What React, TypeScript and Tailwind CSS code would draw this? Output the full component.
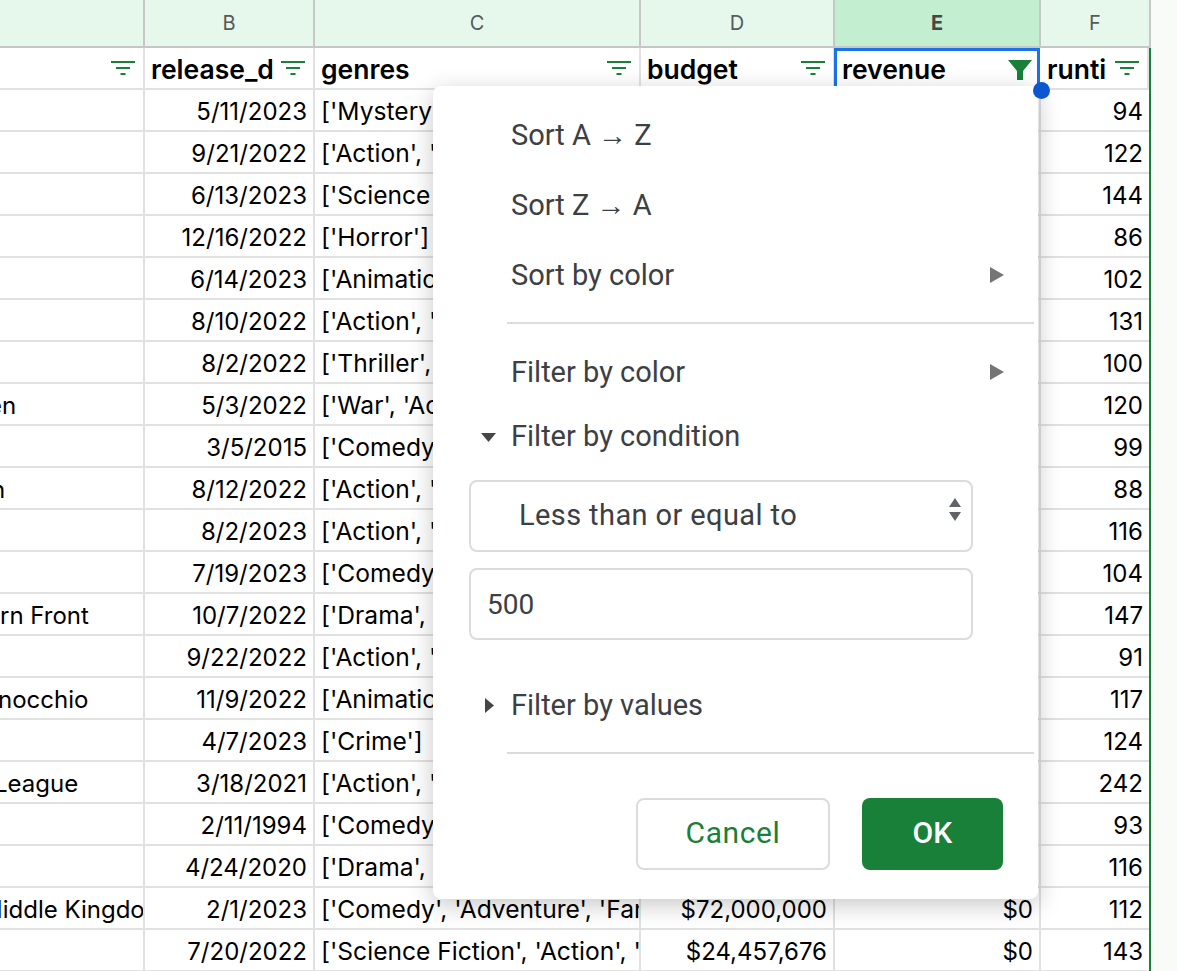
const COLS = [145, 170, 326, 194, 206, 108]

const ROWS: [string, string, string, string, string, string][] = [
  ['', '5/11/2023', "['Mystery', 'Thriller']", '', '', '94'],
  ['', '9/21/2022', "['Action', 'Comedy']", '', '', '122'],
  ['', '6/13/2023', "['Science Fiction']", '', '', '144'],
  ['', '12/16/2022', "['Horror']", '', '', '86'],
  ['', '6/14/2023', "['Animation', 'Family']", '', '', '102'],
  ['', '8/10/2022', "['Action', 'Crime']", '', '', '131'],
  ['', '8/2/2022', "['Thriller', 'Action']", '', '', '100'],
  ['en', '5/3/2022', "['War', 'Action']", '', '', '120'],
  ['', '3/5/2015', "['Comedy', 'Drama']", '', '', '99'],
  ['n', '8/12/2022', "['Action', 'Thriller']", '', '', '88'],
  ['', '8/2/2023', "['Action', 'Comedy']", '', '', '116'],
  ['', '7/19/2023', "['Comedy', 'Drama']", '', '', '104'],
  ['rn Front', '10/7/2022', "['Drama', 'War']", '', '', '147'],
  ['', '9/22/2022', "['Action', 'Thriller']", '', '', '91'],
  ['nocchio', '11/9/2022', "['Animation', 'Fantasy']", '', '', '117'],
  ['', '4/7/2023', "['Crime']", '', '', '124'],
  ['League', '3/18/2021', "['Action', 'Adventure']", '', '', '242'],
  ['', '2/11/1994', "['Comedy', 'Crime']", '', '', '93'],
  ['', '4/24/2020', "['Drama', 'Romance']", '', '', '116'],
  ['Middle Kingdom', '2/1/2023', "['Comedy', 'Adventure', 'Fantasy']", '$72,000,000', '$0', '112'],
  ['', '7/20/2022', "['Science Fiction', 'Action', 'Thriller']", '$24,457,676', '$0', '143'],
]

// titles are scrolled off the left edge of the crop
const TITLE_OFFSET: Record<string, string> = {
  en: '-ml-[12px]',
  n: '-ml-[9px]',
  nocchio: '-ml-[2px]',
  League: '-ml-[6px]',
  'Middle Kingdom': '-ml-[19px]',
}

function FilterIcon({ solid }: { solid?: boolean }) {
  if (solid) {
    return (
      <svg width="24" height="22" viewBox="0 0 24 22" className="shrink-0">
        <path d="M0 0h24L15 11v9H9v-9z" fill="#188038" />
      </svg>
    )
  }
  return (
    <svg width="24" height="15" viewBox="0 0 24 15" className="shrink-0">
      <path d="M0 0h24v2H0zM5 6h14v2H5zM9.500 12h5v2h-5z" fill="#188038" />
    </svg>
  )
}

function ColHead({ label, w, active }: { label: string; w: number; active?: boolean }) {
  return (
    <div
      style={{ width: w }}
      className={
        active
          ? 'h-full shrink-0 flex items-center justify-center bg-[#c4eed0] border-r-2 border-[#c7c7c7] text-[20px] font-bold text-[#444746]'
          : 'h-full shrink-0 flex items-center justify-center border-r-2 border-[#c7c7c7] text-[20px] text-[#575a5a]'
      }
    >
      {label}
    </div>
  )
}

function HeadCell({ label, w, active, solid }: { label: string; w: number; active?: boolean; solid?: boolean }) {
  return (
    <div
      style={{ width: w }}
      className={
        active
          ? 'shrink-0 h-[42px] self-start -ml-px mr-px flex items-center justify-between pl-[5px] pr-[5px] border-[3px] border-b-0 border-[#1a73e8] text-[26.500px] font-semibold text-black'
          : 'shrink-0 h-full flex items-center justify-between pl-[6px] pr-[8px] border-r-2 border-[#e1e1e1] text-[26.500px] font-semibold text-black'
      }
    >
      <span className={active ? 'whitespace-nowrap overflow-hidden pb-[2px]' : 'whitespace-nowrap overflow-hidden pt-1'}>{label}</span>
      <FilterIcon solid={solid} />
    </div>
  )
}

function MenuArrow() {
  return (
    <svg width="14" height="16" viewBox="0 0 14 16" className="shrink-0">
      <path d="M0 0l14 8-14 8z" fill="#757575" />
    </svg>
  )
}

export default function App() {
  return (
    <div className="relative w-[1177px] h-[971px] overflow-hidden bg-[#f9fbf9] font-['Inter',sans-serif]">
      {/* Column letters */}
      <div className="w-[1151px] h-[48px] flex bg-[#e6f7ec] border-b-2 border-[#c7c7c7]">
        <ColHead label="" w={COLS[0]} />
        <ColHead label="B" w={COLS[1]} />
        <ColHead label="C" w={COLS[2]} />
        <ColHead label="D" w={COLS[3]} />
        <ColHead label="E" w={COLS[4]} active />
        <ColHead label="F" w={110} />
      </div>

      <div className="w-[1151px] bg-white border-r-2 border-[#188038]">
        {/* Header row */}
        <div className="h-[42px] flex border-b-2 border-[#e1e1e1]">
          <HeadCell label="" w={COLS[0]} />
          <HeadCell label="release_d" w={COLS[1]} />
          <HeadCell label="genres" w={COLS[2]} />
          <HeadCell label="budget" w={COLS[3]} />
          <HeadCell label="revenue" w={COLS[4]} active solid />
          <HeadCell label="runti" w={COLS[5]} />
        </div>

        {ROWS.map((row, i) => (
          <div key={i} className="h-[42px] flex border-b-2 border-[#e1e1e1] text-[24px] text-black">
            <div style={{ width: COLS[0] }} className="shrink-0 border-r-2 border-[#e1e1e1] overflow-hidden whitespace-nowrap flex items-center pt-1">
              <span className={TITLE_OFFSET[row[0]]}>{row[0]}</span>
            </div>
            <div style={{ width: COLS[1] }} className="shrink-0 border-r-2 border-[#e1e1e1] flex items-center justify-end pr-[6px] pt-1">
              {row[1]}
            </div>
            <div style={{ width: COLS[2] }} className="shrink-0 border-r-2 border-[#e1e1e1] overflow-hidden whitespace-nowrap flex items-center pl-[6px] pt-[2px] text-[24.600px]">
              {row[2]}
            </div>
            <div style={{ width: COLS[3] }} className="shrink-0 border-r-2 border-[#e1e1e1] flex items-center justify-end pr-[6px] pt-1">
              {row[3]}
            </div>
            <div style={{ width: COLS[4] }} className="shrink-0 border-r-2 border-[#e1e1e1] flex items-center justify-end pr-[6px] pt-1">
              {row[4]}
            </div>
            <div style={{ width: COLS[5] }} className="shrink-0 flex items-center justify-end pr-[6px] pt-1">
              {row[5]}
            </div>
          </div>
        ))}
      </div>

      {/* Selection handle */}
      <div className="absolute left-[1033px] top-[82px] w-[17px] h-[17px] rounded-full bg-[#0b57d0] z-20" />

      {/* Filter popup */}
      <div className="absolute left-[433px] top-[86px] w-[605px] h-[813px] bg-white rounded-[8px] shadow-[0_6px_24px_rgba(0,0,0,0.22)] z-10 font-['Roboto',sans-serif] text-[29px] text-[#3c4043] flex flex-col">
        <div className="h-[236px] pt-[29px] pl-[78px] flex flex-col">
          <div className="h-[70px] leading-[40px]">
            Sort A <span className="font-['Liberation_Sans']">→</span> Z
          </div>
          <div className="h-[70px] leading-[40px]">
            Sort Z <span className="font-['Liberation_Sans']">→</span> A
          </div>
          <div className="h-[67px] leading-[40px] flex justify-between items-start pr-[34px]">
            <span>Sort by color</span>
            <span className="pt-[12px]"><MenuArrow /></span>
          </div>
        </div>
        <div className="ml-[74px] mr-[4px] h-[2px] bg-[#dadce0]" />
        <div className="h-[63px] pl-[78px] pr-[34px] pt-[28px] leading-[40px] flex justify-between items-start">
          <span>Filter by color</span>
          <span className="pt-[12px]"><MenuArrow /></span>
        </div>
        <div className="h-[64px] mt-[18px] pl-[48px] flex items-center gap-[15px]">
          <svg width="15" height="9" viewBox="0 0 15 9"><path d="M0 0h15L7.500 9z" fill="#444746" /></svg>
          <span>Filter by condition</span>
        </div>
        <div className="mt-[11px] ml-[36px] w-[504px] h-[72px] rounded-[8px] border-2 border-[#dadce0] flex items-center justify-between pl-[48px] pr-[9px]">
          <span className="tracking-[0.4px]">Less than or equal to</span>
          <svg width="14" height="24" viewBox="0 0 14 24" className="-mt-3">
            <path d="M7 0l6 9H1zM1 14h12l-6 9z" fill="#5f6368" />
          </svg>
        </div>
        <div className="mt-[16px] ml-[36px] w-[504px] h-[72px] rounded-[8px] border-2 border-[#dadce0] flex items-center pl-[16px] pt-[2px] text-[28px]">
          500
        </div>
        <div className="h-[64px] mt-[33px] pl-[52px] flex items-center gap-[17px]">
          <svg width="9" height="15" viewBox="0 0 9 15"><path d="M0 0l9 7.500-9 7.500z" fill="#444746" /></svg>
          <span className="pt-[2px]">Filter by values</span>
        </div>
        <div className="mt-[15px] ml-[74px] mr-[4px] h-[2px] bg-[#dadce0]" />
        <div className="mt-[44px] flex justify-end gap-[32px] pr-[35px]">
          <div className="w-[194px] h-[72px] rounded-[8px] border-2 border-[#dadce0] flex items-center justify-center pb-[3px] text-[30px] tracking-[0.6px] text-[#188038]">
            Cancel
          </div>
          <div className="w-[141px] h-[72px] rounded-[8px] bg-[#188038] flex items-center justify-center pb-[3px] text-[30px] tracking-[0.3px] text-white font-medium">
            OK
          </div>
        </div>
      </div>
    </div>
  )
}
